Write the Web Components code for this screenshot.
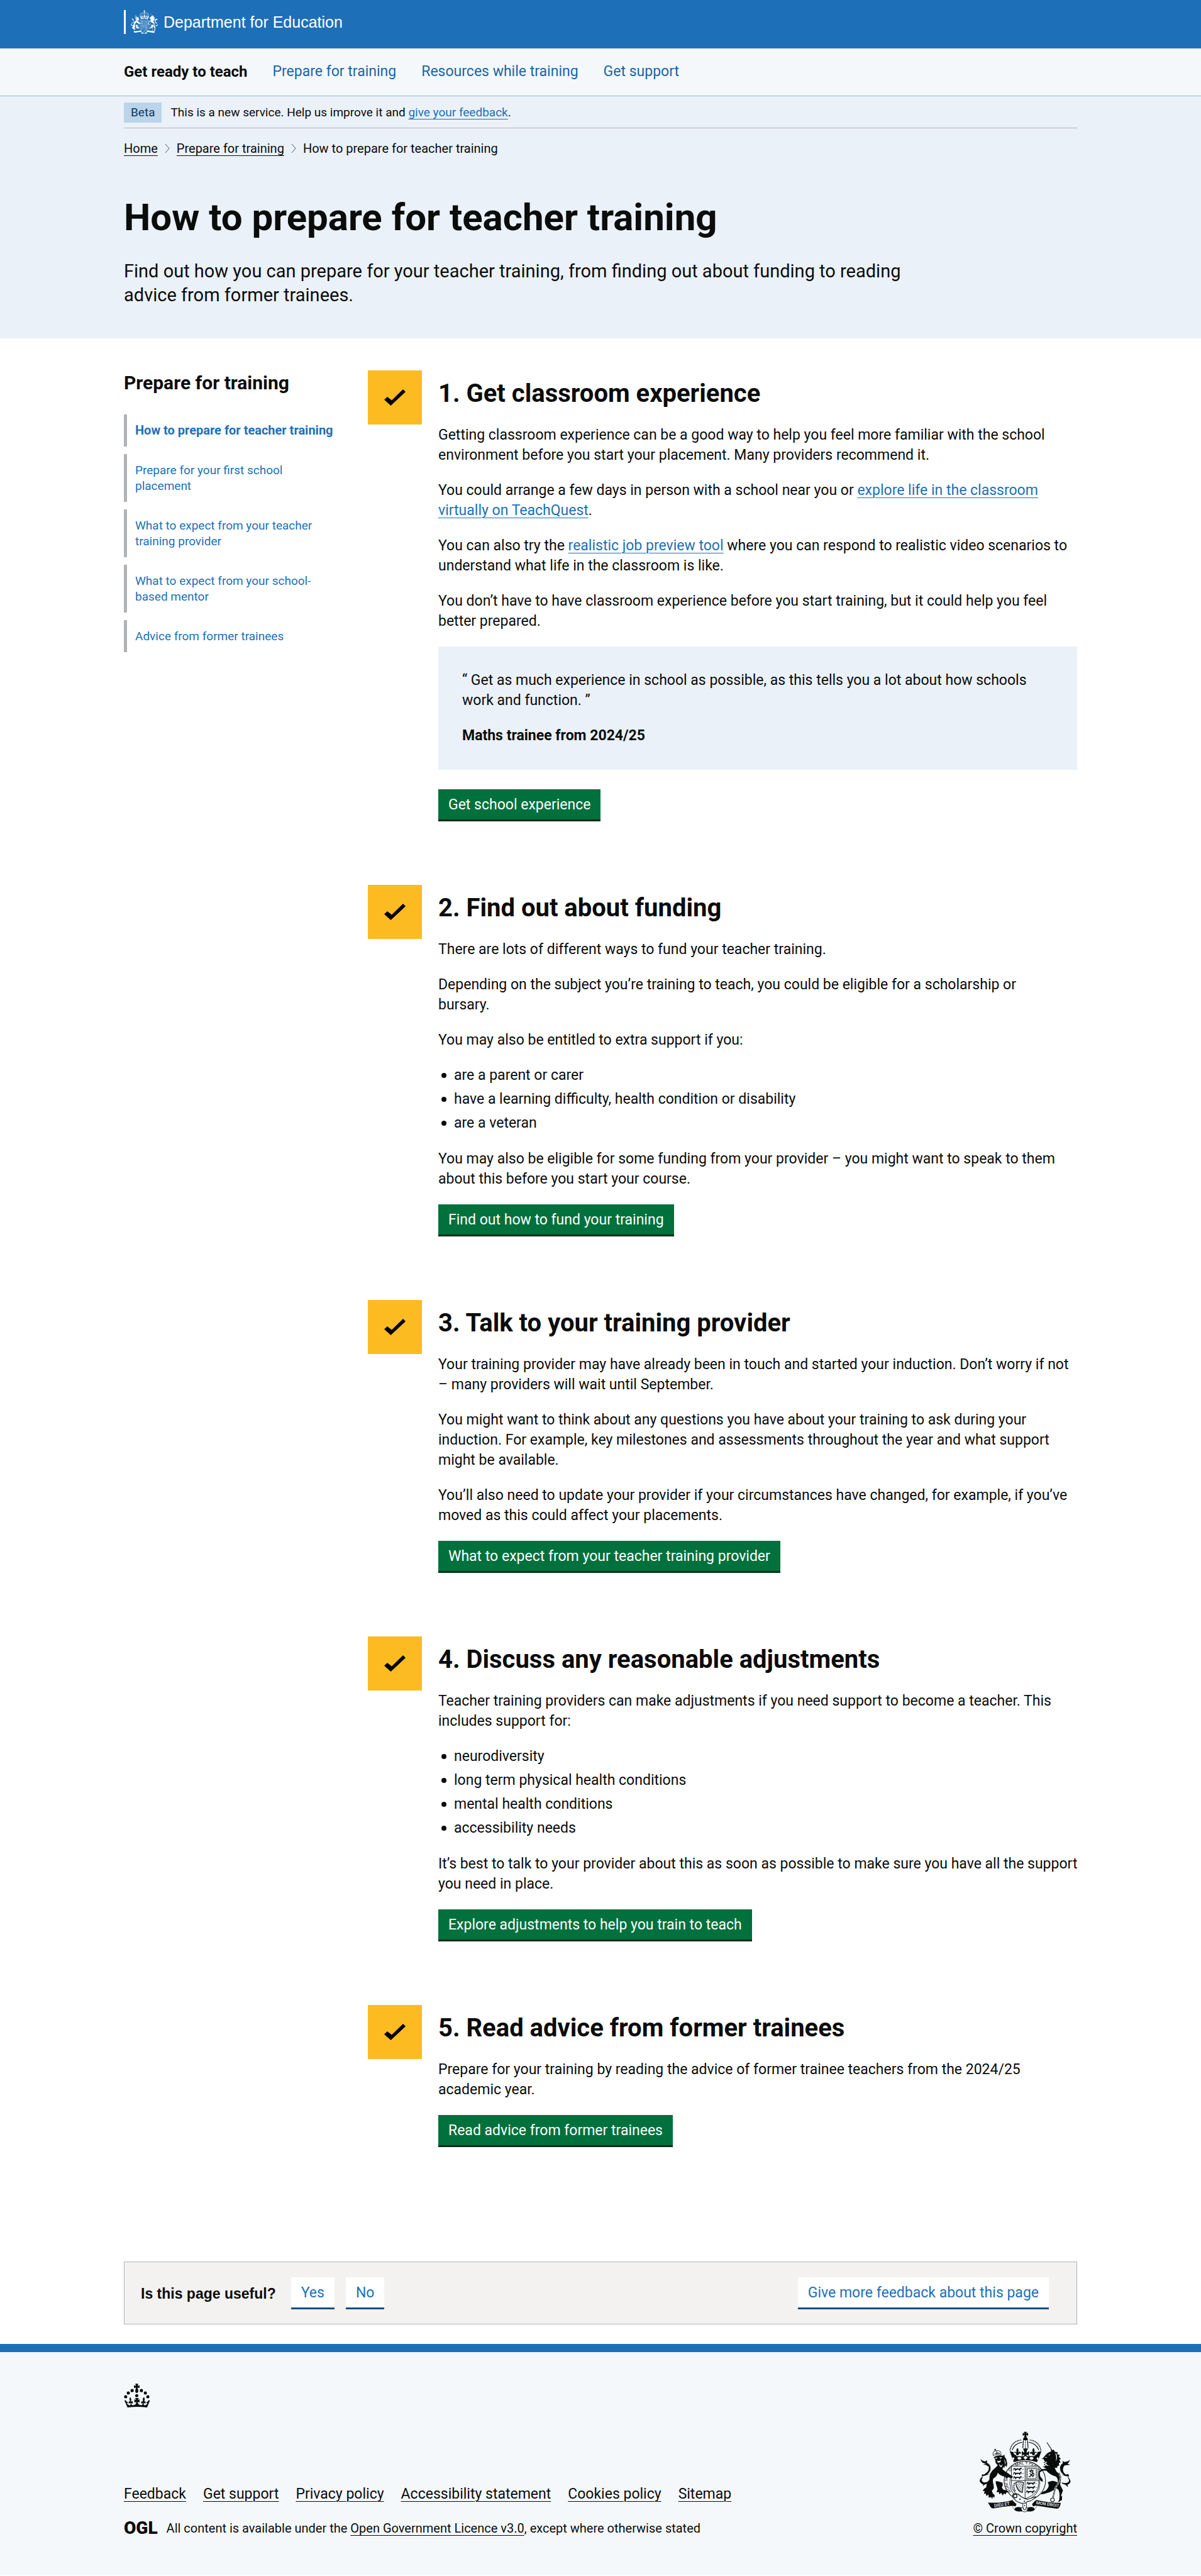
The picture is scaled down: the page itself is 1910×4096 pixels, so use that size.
<!DOCTYPE html>
<html lang="en">
<head>
<meta charset="utf-8">
<meta name="viewport" content="width=device-width, initial-scale=1">
<title>How to prepare for teacher training</title>
<style>
  html { --ink: #0b0c0c; --blue: #1d70b8; --pale: #f4f8fb; --tint: #eaf1f8; --grey: #b1b4b6; --page: 1516px; }
  body { margin: 0; background: #fff; color: var(--ink); font: 23px/32px Roboto, sans-serif; }
  .split { display: grid; grid-template-columns: 388px 1fr; padding-top: 51px; }
  a { color: var(--blue); text-decoration-thickness: 1px; text-underline-offset: 4px; }
  p { margin: 0 0 24px; }
  .wide { margin-right: -16px; }
  ul { margin: 0 0 25px; padding-left: 25px; list-style: none; display: grid; gap: 6px; }
  li::before { content: ""; float: left; width: 8px; height: 8px; margin: 12px 0 0 -20px; border-radius: 50%; background: currentColor; }
</style>
</head>
<body>
<site-header></site-header>
<site-nav></site-nav>
<page-hero heading="How to prepare for teacher training">Find out how you can prepare for your teacher training, from finding out about funding to reading advice from former trainees.</page-hero>
<page-width>
  <main class="split">
    <side-nav></side-nav>
    <step-list>
      <step-card heading="1. Get classroom experience" action="Get school experience">
        <p>Getting classroom experience can be a good way to help you feel more familiar with the school environment before you start your placement. Many providers recommend it.</p>
        <p>You could arrange a few days in person with a school near you or <a href="#">explore life in the classroom virtually on TeachQuest</a>.</p>
        <p>You can also try the <a href="#">realistic job preview tool</a> where you can respond to realistic video scenarios to understand what life in the classroom is like.</p>
        <p>You don’t have to have classroom experience before you start training, but it could help you feel better prepared.</p>
        <quote-box author="Maths trainee from 2024/25">“ Get as much experience in school as possible, as this tells you a lot about how schools work and function. ”</quote-box>
      </step-card>
      <step-card heading="2. Find out about funding" action="Find out how to fund your training">
        <p>There are lots of different ways to fund your teacher training.</p>
        <p>Depending on the subject you’re training to teach, you could be eligible for a scholarship or<br>bursary.</p>
        <p>You may also be entitled to extra support if you:</p>
        <ul>
          <li>are a parent or carer</li>
          <li>have a learning difficulty, health condition or disability</li>
          <li>are a veteran</li>
        </ul>
        <p>You may also be eligible for some funding from your provider – you might want to speak to them about this before you start your course.</p>
      </step-card>
      <step-card heading="3. Talk to your training provider" action="What to expect from your teacher training provider">
        <p>Your training provider may have already been in touch and started your induction. Don’t worry if not – many providers will wait until September.</p>
        <p>You might want to think about any questions you have about your training to ask during your induction. For example, key milestones and assessments throughout the year and what support might be available.</p>
        <p>You’ll also need to update your provider if your circumstances have changed, for example, if you’ve moved as this could affect your placements.</p>
      </step-card>
      <step-card heading="4. Discuss any reasonable adjustments" action="Explore adjustments to help you train to teach">
        <p>Teacher training providers can make adjustments if you need support to become a teacher. This includes support for:</p>
        <ul>
          <li>neurodiversity</li>
          <li>long term physical health conditions</li>
          <li>mental health conditions</li>
          <li>accessibility needs</li>
        </ul>
        <p class="wide">It’s best to talk to your provider about this as soon as possible to make sure you have all the support you need in place.</p>
      </step-card>
      <step-card heading="5. Read advice from former trainees" action="Read advice from former trainees">
        <p>Prepare for your training by reading the advice of former trainee teachers from the 2024/25 academic year.</p>
      </step-card>
    </step-list>
  </main>
  <page-feedback></page-feedback>
</page-width>
<site-footer></site-footer>

<script>
const define = (name, render) => customElements.define(name, class extends HTMLElement {
  connectedCallback() {
    if (!this.shadowRoot) this.attachShadow({ mode: 'open' }).innerHTML = render(this);
  }
});

const LINK = 'a{color:inherit;text-decoration-thickness:1px;text-underline-offset:4px}';

/* Royal arms: ink follows currentColor, knock-outs use --back. */
const lionRow = (x, y) => `<g transform="translate(${x} ${y})"><path d="M4 6q6-7 12-2l6 3q14-3 26 0l8-2 4-6 8 2-4 4 8 5-10 1-8 4 4 7h-8l-6-8-16 1-5 7h-9l4-8-8-3-6 4z"/><path d="M0 18q8-4 10 2M72 16q6-10 10-2" fill="none" stroke="currentColor" stroke-width="3"/></g>`;
const fleur = x => `<path d="M${x} 250q14 14 5 34 8-8 17-4 10 8 2 20 -4-10-12-7l-6 12h-12l-6-12q-8-3-12 7-8-12 2-20 9-4 17 4-9-20 5-34z"/>`;
const arms = words => `
<svg viewBox="256 124 700 616" fill="currentColor" aria-hidden="true">
  <path d="M597 126h25l-7 15 15-8v24l-15-8 5 20h-21l5-20-15 8v-24l15 8z"/>
  <path d="M592 190q-2-22 18-23 20 1 18 23z"/>
  <g fill="none" stroke="currentColor">
    <path d="M493 264q14-66 86-76M727 264q-14-66-86-76" stroke-width="9" stroke-linecap="round" stroke-dasharray="0 13"/>
    <path d="M508 266q20-52 76-60M712 266q-20-52-76-60" stroke-width="5"/>
    <path d="M594 192l-4 58M626 192l4 58" stroke-width="6"/>
    <path d="M610 192v60" stroke-width="8" stroke-linecap="round" stroke-dasharray="0 14"/>
  </g>
  <path d="M490 274l26 6q4 14 16 20l12 12h132l12-12q12-6 16-20l28-6-22 58-12 26q-90-32-176 0l-12-28z"/>
  ${fleur(549)}${fleur(671)}
  <path d="M592 254h38l-10 18-2 14 20-12v36l-20-12 4 20h-24l2-20-18 12v-36l18 12-1-14z"/>
  <g fill="var(--back)"><path d="M610 310l16 14-16 14-16-14zM514 318l12 10-8 16-8-12zM706 318l-12 10 8 16 8-12z"/><ellipse cx="564" cy="328" rx="15" ry="10"/><ellipse cx="656" cy="328" rx="15" ry="10"/><circle cx="530" cy="292" r="8"/><circle cx="576" cy="298" r="8"/><circle cx="644" cy="298" r="8"/><circle cx="690" cy="292" r="8"/></g>

  <ellipse cx="605" cy="500" rx="158" ry="150" fill="var(--back)" stroke="currentColor" stroke-width="5"/>
  <path d="M495 470q-22 110 60 160M715 470q22 110-60 160" fill="none" stroke="currentColor" stroke-width="4"/>
  ${words ? '<path id="garter" d="M504 581A132 126 0 1 1 706 581" fill="none"/><text font-family="Roboto" font-size="32"><textPath href="#garter">HONI SOIT QUI MAL Y PENSE</textPath></text>' : ''}
  <path d="M503 388h208v132q0 80-104 118-104-38-104-118z" fill="var(--back)" stroke="currentColor" stroke-width="4"/>
  <path d="M607 390v248M503 498h208" stroke="currentColor" stroke-width="4"/>
  ${lionRow(514, 400)}${lionRow(514, 432)}${lionRow(514, 464)}${lionRow(616, 508)}${lionRow(616, 540)}${lionRow(612, 572)}
  <g fill="none" stroke="currentColor"><path d="M616 400h84v90h-84z" stroke-width="3"/><path d="M624 408h68v74h-68z" stroke-width="5" stroke-dasharray="9 4"/><path d="M640 420l10 12 4-14 14 6-8 12 12 8-14 6-10 14-12 6M642 444l12 8 14 18M668 464l8-12" stroke-width="7"/>
  <path d="M536 512q32-12 58 2l-8 74q-42-6-50-76z" stroke-width="6"/><path d="M546 520l36 56M558 514l28 44M570 512l18 28M540 534l34 48" stroke-width="3"/><path d="M526 516q-12 36 8 66" stroke-width="8" stroke-dasharray="9 5"/></g>

  <!-- lion -->
  <path d="M360 334l14-20q34-12 66-6l10-10 0 16 14 22 7 34-4 24-14-12-4 20-10-8-4 18q34 30 58 42l22 14-10 12-30-8-6 12-14-16q-40-6-56-30-6 30-34 44-8 16 2 50l2 24q-6 14-16 18l8 22 14 12-2 20-12-8-4 18-10-16-16 8-4-26-14 12-6-20-14 4 6-22-16-2q10-18 28-26 2-34 24-60-6-50 46-90l18-18-16-18-4-26-8-16z"/>
  <path d="M384 502q34 4 52 14 4 18-6 36l12 16 22 4q16 4 18 14l-20 4 0 14-16-8-8 16-14-20-12 12-6-20-16 4q0-14 8-20-4-22-14-46z"/>
  <g fill="var(--back)"><path d="M374 326l22-5-6 12zM410 322l24-2-14 12zM392 344l14 6 18-8-6 16-18 4zM410 366q2 16 14 20l12-16-8 26q-20 0-18-30zM446 334q18 22 10 46-2-22-10-46zM374 350q0 22 12 34-2-18-12-34z"/></g>
  <path d="M364 306q-8-32 24-36 38-4 36 32-30-4-60 4z" fill="none" stroke="currentColor" stroke-width="5" stroke-dasharray="7 3"/>
  <path d="M374 296q24-12 42-4M379 256v18M372 263h14M392 274v24" fill="none" stroke="currentColor" stroke-width="5"/>
  <path d="M332 516q-30 16-52 8-26-14-16-36 6-12 22-22-2 12-8 20-6 18 16 26 20 2 38-10zM276 466l4-16 14 2 28-22q12-16 8-38l-18-12-26-6 24-2-30-12-14-26 20 14 18 4 14-10-2 20q30 12 28 48-4 24-26 40l22-4q-28 12-60 20z"/>
  <path d="M284 540l6-20 16 4z"/>

  <!-- unicorn -->
  <path d="M774 208l36 54" fill="none" stroke="currentColor" stroke-width="7" stroke-dasharray="6 2"/>
  <path d="M748 322l16-20q20-22 42-26l-4-18 14 8 10-4 8 16 22 4-4 14 20 8-8 12 16 16-12 8 10 20-14 4 4 20-14 2-4 14q-46 2-78-26-4-12 2-20l-12 2-10-12-2-10-16 2 8-8z"/>
  <path d="M752 372q40 38 104 24M750 356q48 34 104 26" fill="none" stroke="currentColor" stroke-width="6" stroke-dasharray="10 4"/>
  <path d="M744 392q44-16 88 8l14 28q22 16 26 42l8 34-6 24 22 46-8 22q-12 18 0 40l-20 6 2-34q-2-30-10-40l-28-22-2 22-32 18-46 14-26 4 14-20 26-10q22-24 22-40l-8-24 32-10 16 2 28 10q4-26-12-44-42-10-74-44-28-10-50 12-2 24 6 36l12 12 6 24-18-8-14-22q-10-34 4-54 18-18 54-16z"/>
  <path d="M784 302l16-6-6 10zM760 318l20 2-18 4zM838 292q12 30 2 60 20-30 4-62z" fill="var(--back)"/>
  <path d="M888 520q34 18 52 6 22-16 8-38l-16-22q0 14 8 22 8 18-10 26-18 6-42-2zM944 466l-8-18-18 4q-24-18-22-42 0-14 14-28l42-4-20-8 20-30-22 12-26 4-10-10 0 20q-24 16-20 46 4 28 30 44l-18-4q30 16 58 14z"/>
  <path d="M934 548l-4-24-18 4zM858 664l12-26 20-26-2 34z"/>
  <g fill="none" stroke="var(--back)" stroke-width="13"><path d="M862 440q22 24 10 60l-36 58-16 68"/></g>
  <g fill="none" stroke="currentColor"><path d="M862 440q22 24 10 60l-36 58-16 68" stroke-width="11" stroke-dasharray="18 5"/><path d="M862 440q22 24 10 60l-36 58-16 68" stroke="var(--back)" stroke-width="4" stroke-dasharray="11 12" stroke-dashoffset="-3"/><circle cx="816" cy="645" r="14" stroke-width="5"/></g>

  <!-- scroll and buckle -->
  <path d="M324 666q100 6 188-20l4 8 26 24-8 16-24-4q-72 6-146 20-20-4-24-18zM880 668q-100-2-186-22l-12 8-22 24 8 16 24-6q80 14 160 24 16-4 20-18z"/>
  <path d="M534 704q30-12 46 4l4 24q-50 4-60-14zM672 704q-30-12-46 4l-4 24q50 4 60-14z"/>
  <path d="M508 688q10 42 58 44h76q44-4 56-44" fill="none" stroke="currentColor" stroke-width="3" stroke-dasharray="12 5"/>
  <path d="M512 610q6-18 30-12 16 4 34 22 34 20 52 20l60-20q-20 32-62 38l-30 18q-56-14-68-34-20-14-16-32z" fill="var(--back)" stroke="currentColor" stroke-width="5" stroke-linejoin="round"/>
  <circle cx="532" cy="616" r="13" fill="none" stroke="currentColor" stroke-width="6"/><circle cx="568" cy="640" r="5"/><circle cx="602" cy="656" r="5"/>
  <path d="M590 670h28v34h10q-2 32-24 33-24-1-28-33h14z" fill="var(--back)" stroke="currentColor" stroke-width="4"/><path d="M592 702q2 20 12 20t12-20" fill="none" stroke="currentColor" stroke-width="5"/><circle cx="604" cy="688" r="4"/>
  ${words ? '<path id="dieu" d="M374 702l150-24" fill="none"/><path id="droit" d="M690 678l180 24" fill="none"/><g font-family="Roboto" font-weight="500" font-size="33" fill="var(--back)"><text><textPath href="#dieu">DIEU ET</textPath></text><text><textPath href="#droit">MON DROIT</textPath></text></g>' : ''}
</svg>`;

define('page-width', () => `<style>
  :host{display:block;max-width:var(--page);margin:0 auto}
</style><slot></slot>`);

define('site-header', () => `<style>
  :host{display:block;background:var(--blue);color:#fff;--back:var(--blue)}
  header{display:flex;height:61px;padding-top:16px}
  a{display:flex;height:38px;align-items:center;gap:9px;color:inherit;text-decoration:none;font:25px/38px "Liberation Sans",sans-serif;border-left:3px solid #fff;padding-left:8px}
  svg{width:43px;height:38px}
</style><page-width><header><a href="#">${arms(false)}<span>Department for Education</span></a></header></page-width>`);

define('site-nav', () => `<style>
  :host{display:block;background:var(--pale);border-bottom:1px solid #8eb8dc}
  nav{display:flex;gap:40px;padding:21px 0 22px;font-size:23px;line-height:32px}
  a{color:#1a65a6;text-decoration:none}
  a[aria-current]{color:var(--ink);font-weight:700;font-size:24px}
</style><page-width><nav aria-label="Main"><a href="#" aria-current="true">Get ready to teach</a><a href="#">Prepare for training</a><a href="#">Resources while training</a><a href="#">Get support</a></nav></page-width>`);

define('phase-banner', () => `<style>
  :host{display:flex;align-items:center;gap:14px;padding:10px 0 8px;border-bottom:1px solid var(--grey);font-size:19px;line-height:32px}
  strong{background:#bbd4ea;color:#0f385c;font-weight:400;padding:0 11px}
  ${LINK} a{color:var(--blue)}
</style><strong>Beta</strong><span>This is a new service. Help us improve it and <a href="#">give your feedback</a>.</span>`);

define('bread-crumbs', () => {
  const chevron = '<svg viewBox="0 0 8 14" aria-hidden="true"><path d="M1 0l6 7-6 7" fill="none" stroke="#505a5f" stroke-width="1"/></svg>';
  return `<style>
  :host{display:block;padding-top:20px;font-size:20px;line-height:24px}
  nav{display:flex;align-items:center;gap:11px}
  svg{width:8px;height:14px}
  ${LINK}
</style><nav aria-label="Breadcrumb"><a href="#">Home</a>${chevron}<a href="#">Prepare for training</a>${chevron}<span>How to prepare for teacher training</span></nav>`;
});

define('page-hero', el => `<style>
  :host{display:block;background:var(--tint);padding-bottom:50px}
  h1{margin:66px 0 34px;font-size:60px;line-height:64px}
  p{margin:0;max-width:1290px;font-size:29px;line-height:38px}
</style><page-width><phase-banner></phase-banner><bread-crumbs></bread-crumbs><h1>${el.getAttribute('heading')}</h1><p><slot></slot></p></page-width>`);

define('side-nav', () => `<style>
  :host{display:block;padding:2px 48px 0 0}
  h2{margin:0 0 32px;font-size:30px;line-height:36px}
  ul{margin:0;padding:0;list-style:none;display:grid;gap:12px;font-size:19px;line-height:25px}
  li{border-left:5px solid var(--grey);padding:13px 0 13px 13px;max-width:320px}
  a{color:var(--blue);text-decoration:none}
  a[aria-current]{font-weight:700;font-size:20px}
</style><h2>Prepare for training</h2><nav aria-label="Prepare for training"><ul>
<li><a href="#" aria-current="page">How to prepare for teacher training</a></li>
<li><a href="#">Prepare for your first school placement</a></li>
<li><a href="#">What to expect from your teacher training provider</a></li>
<li><a href="#">What to expect from your school-based mentor</a></li>
<li><a href="#">Advice from former trainees</a></li></ul></nav>`);

define('step-list', () => `<style>
  :host{display:grid;gap:101px}
</style><slot></slot>`);

define('step-card', el => `<style>
  :host{display:flex;gap:26px}
  .tick{flex:none;display:grid;place-items:center;width:86px;height:86px;background:#fdbb22}
  .tick svg{width:34px;height:26px}
  .body{flex:1;padding-top:13px}
  h2{margin:0 0 26px;font-size:40px;line-height:48px}
  .action{display:inline-block;padding:10px 16px 8px;background:#00703c;border-bottom:3px solid #002d18;color:#fff;text-decoration:none;line-height:30px;vertical-align:top}
</style><div class="tick"><svg viewBox="0 0 34 26" aria-hidden="true"><path d="M30 0L12 17.500 5 12 0 16.500 10.500 26 34 4z" fill="#000"/></svg></div>
<div class="body"><h2>${el.getAttribute('heading')}</h2><slot></slot><a class="action" href="#">${el.getAttribute('action')}</a></div>`);

define('quote-box', el => `<style>
  :host{display:block;margin:24px 0 31px;padding:38px;background:var(--tint)}
  blockquote{margin:0;max-width:930px}
  p{margin:0 0 24px}
  cite{display:block;font-style:normal;font-weight:700}
</style><blockquote><p><slot></slot></p><cite>${el.getAttribute('author')}</cite></blockquote>`);

define('page-feedback', () => `<style>
  :host{display:flex;align-items:center;gap:24px;margin:182px 0 31px;padding:24px 44px 23px 26px;border:1px solid var(--grey);background:#f3f2f1}
  strong{font:700 23px/32px "Liberation Sans",sans-serif}
  .more{margin-left:auto}
  button,a{padding:10px 16px 8px;border:0;border-bottom:3px solid #144e81;background:#fff;color:var(--blue);font:inherit;line-height:30px;text-decoration:none}
  .group{display:flex;gap:18px}
</style><strong>Is this page useful?</strong><span class="group"><button type="button">Yes</button><button type="button">No</button></span><a class="more" href="#">Give more feedback about this page</a>`);

define('site-footer', () => `<style>
  :host{display:block;background:var(--pale);border-top:13px solid var(--blue);padding:50px 0 63px;--back:var(--pale)}
  .crown{display:block;width:41px;height:38px;margin-bottom:38px}
  .row{display:flex;justify-content:space-between;align-items:flex-end}
  nav{display:flex;gap:27px;margin-bottom:26px}
  .licence{display:flex;align-items:center;gap:14px;font-size:20px;line-height:24px}
  .ogl{font-size:28px;font-weight:900}
  .copy{display:flex;flex-direction:column;align-items:center;gap:13px;font-size:20px;line-height:24px}
  .copy svg{width:146px;height:129px}
  ${LINK}
</style><page-width><footer>
<svg class="crown" viewBox="34 68 194 181" fill="#0b0c0c" aria-hidden="true">
  <path d="M120 69h22l-5 17 15-5v22l-15-5 4 18q6 22-10 23-16-1-10-23l4-18-15 5V81l15 5z"/>
  <circle cx="96" cy="121" r="12"/><circle cx="166" cy="121" r="12"/><circle cx="67" cy="139" r="12"/><circle cx="196" cy="139" r="12"/><circle cx="47" cy="168" r="12"/><circle cx="215" cy="168" r="12"/><circle cx="131" cy="160" r="12"/>
  <path d="M37 195l12-1 2 8 12 6v10l-8-4q4 14 18 18 10 2 12-6l-2-12-14 6 2-18 10 2q-10-20 0-34 12 14 6 34l14-2v18l-12-6q0 16 14 18 16-2 22-12l2-14-14 6v-26l14 8-9-16h29l-9 16 14-8v26l-14-6 3 14q8 10 22 12 14-4 14-18l-12 6v-18l14 2q-8-20 6-34 12 14 2 34l10-2 2 18-14-6-2 12q4 8 12 6 14-4 18-18l-8 4v-10l12-6 2-8 12 1-22 54q-72-9-148 0z"/>
</svg>
<div class="row"><div>
<nav aria-label="Footer"><a href="#">Feedback</a><a href="#">Get support</a><a href="#">Privacy policy</a><a href="#">Accessibility statement</a><a href="#">Cookies policy</a><a href="#">Sitemap</a></nav>
<div class="licence"><span class="ogl">OGL</span><span>All content is available under the <a href="#">Open Government Licence v3.0</a>, except where otherwise stated</span></div>
</div><div class="copy">${arms(true)}<a href="#">© Crown copyright</a></div></div>
</footer></page-width>`);
</script>
</body>
</html>
